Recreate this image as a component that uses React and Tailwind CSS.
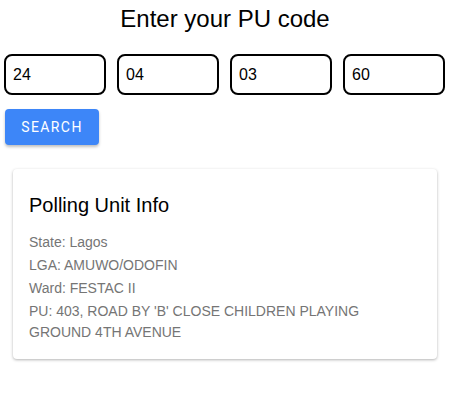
import { useState } from 'react';

const App = () => {
  const [codes, setCodes] = useState(['24', '04', '03', '60']);

  const lines = [
    'State: Lagos',
    'LGA: AMUWO/ODOFIN',
    'Ward: FESTAC II',
    "PU: 403, ROAD BY 'B' CLOSE CHILDREN PLAYING GROUND 4TH AVENUE",
  ];

  return (
    <div className="w-[466px] min-h-[411px] bg-white font-['Liberation_Sans',Arial,sans-serif] text-black">
      {/* Heading */}
      <h1 className="w-[450px] text-center text-[24px] leading-[28px] pt-[5px]">Enter your PU code</h1>

      {/* Code inputs */}
      <div className="flex gap-[11px] pl-[4px] pr-[20px] mt-[21px]">
        {codes.map((c, i) => (
          <input
            key={i}
            value={c}
            onChange={(e) => {
              const next = [...codes];
              next[i] = e.target.value;
              setCodes(next);
            }}
            className="w-[102px] h-[41px] border-2 border-black rounded-[8px] px-[7px] text-[16px] outline-none"
          />
        ))}
      </div>

      {/* Search button */}
      <button className="ml-[5px] mt-[14px] w-[94px] h-[36px] bg-[#3d86f8] text-white text-[14px] tracking-[0.1em] font-['Roboto',sans-serif] rounded-[4px] shadow-[0_2px_3px_rgba(0,0,0,0.25)]">
        SEARCH
      </button>

      {/* Info card */}
      <div className="ml-[13px] mt-[24px] w-[424px] rounded-[4px] bg-white shadow-[0_1px_3px_rgba(0,0,0,0.3)] px-[16px] pt-[24px] pb-[14px]">
        <h2 className="text-[20px] leading-[24px] mb-[15px]">Polling Unit Info</h2>
        <div className="text-[14px] text-[#757575] pr-[46px]">
          {lines.map((l) => (
            <p key={l} className="leading-[21px] mb-[2px]">{l}</p>
          ))}
        </div>
      </div>
    </div>
  );
};

export default App;
